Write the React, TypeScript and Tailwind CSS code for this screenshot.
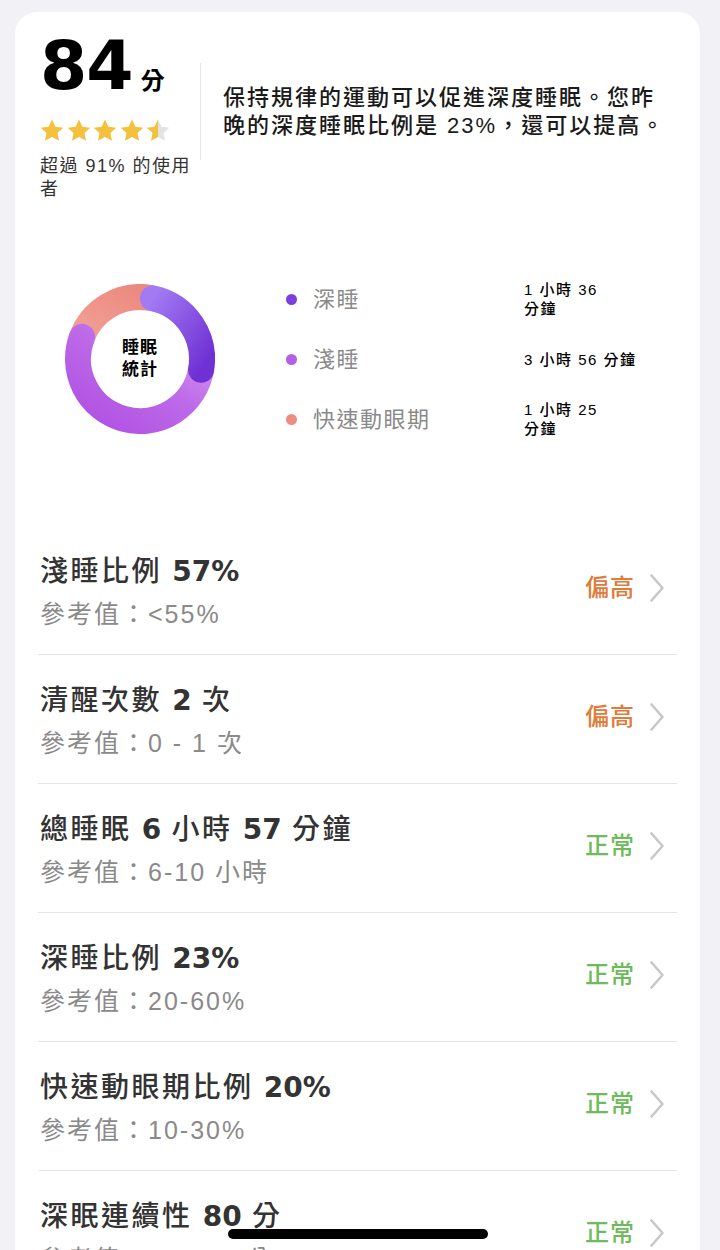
import React from "react";

const FONT = "font-['Liberation_Sans','Noto_Sans_CJK_TC',sans-serif]";

type Part = { text: string; bold?: boolean };

interface MetricRow {
  title: Part[];
  reference: string;
  status: "high" | "normal";
}

const ROWS: MetricRow[] = [
  { title: [{ text: "淺睡比例 " }, { text: "57%", bold: true }], reference: "參考值：<55%", status: "high" },
  { title: [{ text: "清醒次數 " }, { text: "2", bold: true }, { text: " 次" }], reference: "參考值：0 - 1 次", status: "high" },
  {
    title: [
      { text: "總睡眠 " },
      { text: "6", bold: true },
      { text: " 小時 " },
      { text: "57", bold: true },
      { text: " 分鐘" },
    ],
    reference: "參考值：6-10 小時",
    status: "normal",
  },
  { title: [{ text: "深睡比例 " }, { text: "23%", bold: true }], reference: "參考值：20-60%", status: "normal" },
  { title: [{ text: "快速動眼期比例 " }, { text: "20%", bold: true }], reference: "參考值：10-30%", status: "normal" },
  { title: [{ text: "深眠連續性 " }, { text: "80", bold: true }, { text: " 分" }], reference: "參考值：70-100 分", status: "normal" },
];

const LEGEND = [
  { label: "深睡", dot: "bg-[#7b3fe0]", value: ["1 小時 36", "分鐘"] },
  { label: "淺睡", dot: "bg-[#b55ee6]", value: ["3 小時 56 分鐘"] },
  { label: "快速動眼期", dot: "bg-[#ee8c84]", value: ["1 小時 25", "分鐘"] },
];

function Star({ half = false }: { half?: boolean }) {
  return (
    <svg width="24" height="24" viewBox="0 0 24 24" aria-hidden>
      {half ? (
        <defs>
          <linearGradient id="halfStar" x1="0" x2="1" y1="0" y2="0">
            <stop offset="0.5" stopColor="#f4c03f" />
            <stop offset="0.5" stopColor="#e3e3e3" />
          </linearGradient>
        </defs>
      ) : null}
      <path
        d="M12 0.6l3.45 7.1 7.85 1-5.8 5.35 1.5 7.75L12 18l-7 3.8 1.5-7.75-5.8-5.35 7.85-1z"
        fill={half ? "url(#halfStar)" : "#f4c03f"}
      />
    </svg>
  );
}

// angles in degrees, clockwise from 12 o'clock
function arcPath(cx: number, cy: number, r: number, a0: number, a1: number) {
  const pt = (a: number) => {
    const rad = (a * Math.PI) / 180;
    return [cx + r * Math.sin(rad), cy - r * Math.cos(rad)];
  };
  const [x0, y0] = pt(a0);
  const [x1, y1] = pt(a1);
  const large = a1 - a0 > 180 ? 1 : 0;
  return `M ${x0.toFixed(2)} ${y0.toFixed(2)} A ${r} ${r} 0 ${large} 1 ${x1.toFixed(2)} ${y1.toFixed(2)}`;
}

function SleepDonut() {
  const c = 75;
  const r = 62;
  return (
    <div className="relative h-[150px] w-[150px] shrink-0">
      <svg width="150" height="150" viewBox="0 0 150 150" aria-hidden>
        <defs>
          <linearGradient id="remGrad" x1="0" y1="1" x2="1" y2="0">
            <stop offset="0" stopColor="#f2a097" />
            <stop offset="1" stopColor="#ec8a80" />
          </linearGradient>
          <linearGradient id="lightGrad" x1="1" y1="0" x2="0" y2="1">
            <stop offset="0" stopColor="#d79bf2" />
            <stop offset="0.45" stopColor="#bd6ae8" />
            <stop offset="1" stopColor="#b050e2" />
          </linearGradient>
          <linearGradient id="deepGrad" x1="0" y1="0" x2="1" y2="1">
            <stop offset="0" stopColor="#a27af2" />
            <stop offset="1" stopColor="#6f30d4" />
          </linearGradient>
        </defs>
        <path d={arcPath(c, c, r, 290, 368)} stroke="url(#remGrad)" strokeWidth="26" fill="none" strokeLinecap="round" />
        <path d={arcPath(c, c, r, 100, 291)} stroke="url(#lightGrad)" strokeWidth="26" fill="none" strokeLinecap="round" />
        <path d={arcPath(c, c, r, 12, 100)} stroke="url(#deepGrad)" strokeWidth="26" fill="none" strokeLinecap="round" />
      </svg>
      <div className="absolute inset-0 flex items-center justify-center">
        <p className="text-center text-[17px] font-bold leading-[22px] tracking-[1px] text-black">
          睡眠
          <br />
          統計
        </p>
      </div>
    </div>
  );
}

function Chevron() {
  return (
    <svg width="16" height="30" viewBox="0 0 16 30" aria-hidden>
      <path d="M2.5 2.5 L13.5 15 L2.5 27.5" stroke="#c7c7cc" strokeWidth="2.6" fill="none" strokeLinecap="round" strokeLinejoin="round" />
    </svg>
  );
}

export default function App() {
  return (
    <div className={`relative h-[1250px] w-[720px] overflow-hidden bg-[#f2f2f6] ${FONT}`}>
      <div className="ml-[15px] mt-[12px] w-[685px] rounded-[22px] bg-white pb-[200px] pt-[20px]">
        {/* header */}
        <div className="flex px-[25px]">
          <div className="w-[160px] shrink-0">
            <div className="flex items-baseline">
              <span className="font-['DejaVu_Sans',sans-serif] text-[68px] font-bold leading-none tracking-[-1px] text-black">
                84
              </span>
              <span className="ml-[8px] text-[24px] font-bold text-black">分</span>
            </div>
            <div className="mt-[19px] flex h-[24px] gap-[2.5px]">
              <Star />
              <Star />
              <Star />
              <Star />
              <Star half />
            </div>
            <p className="mt-[12px] text-[18px] leading-[23px] tracking-[1.5px] text-[#333]">
              超過 91% 的使用者
            </p>
          </div>
          <div className="mt-[31px] flex h-[97px] flex-1 items-center border-l border-[#e6e6e6] pl-[22px]">
            <p className="text-[22px] font-medium leading-[28px] tracking-[2px] text-[#1a1a1a]">
              保持規律的運動可以促進深度睡眠。您昨晚的深度睡眠比例是 23%，還可以提高。
            </p>
          </div>
        </div>

        {/* sleep stats */}
        <div className="mt-[68px] flex items-center pl-[50px]">
          <SleepDonut />
          <div className="ml-[71px] flex flex-col">
            {LEGEND.map((item) => (
              <div key={item.label} className="flex h-[60px] items-center">
                <span className={`h-[11px] w-[11px] shrink-0 rounded-full ${item.dot}`} />
                <span className="ml-[16px] w-[211px] text-[22px] tracking-[1.5px] text-[#8a8a8a]">{item.label}</span>
                <span className="text-[15px] font-medium leading-[19px] tracking-[1.5px] text-black">
                  {item.value.map((line, i) => (
                    <React.Fragment key={line}>
                      {i > 0 ? <br /> : null}
                      {line}
                    </React.Fragment>
                  ))}
                </span>
              </div>
            ))}
          </div>
        </div>

        {/* metric rows */}
        <div className="mx-[23px] mt-[77px]">
          {ROWS.map((row, idx) => (
            <div
              key={idx}
              className={`flex items-center pb-[23px] pl-[2px] pr-[12px] pt-[28px] ${idx < ROWS.length - 1 ? "border-b border-[#e5e5e5]" : ""}`}
            >
              <div className="flex-1">
                <p className="text-[28px] font-medium leading-[36px] tracking-[2.5px] text-[#333]">
                  {row.title.map((part, i) => (
                    <span
                      key={i}
                      className={part.bold ? "font-['DejaVu_Sans',sans-serif] font-bold tracking-normal" : ""}
                    >
                      {part.text}
                    </span>
                  ))}
                </p>
                <p className="mt-[7px] text-[25px] leading-[34px] tracking-[2px] text-[#8a8a8a]">{row.reference}</p>
              </div>
              <div className="mb-[10px] flex items-center gap-[14px]">
                <span
                  className={`text-[24px] font-medium tracking-[1px] ${row.status === "high" ? "text-[#e07b3a]" : "text-[#6dbb5a]"}`}
                >
                  {row.status === "high" ? "偏高" : "正常"}
                </span>
                <Chevron />
              </div>
            </div>
          ))}
        </div>
      </div>

      <div className="absolute left-[228px] top-[1229px] h-[10px] w-[260px] rounded-full bg-black" />
    </div>
  );
}
